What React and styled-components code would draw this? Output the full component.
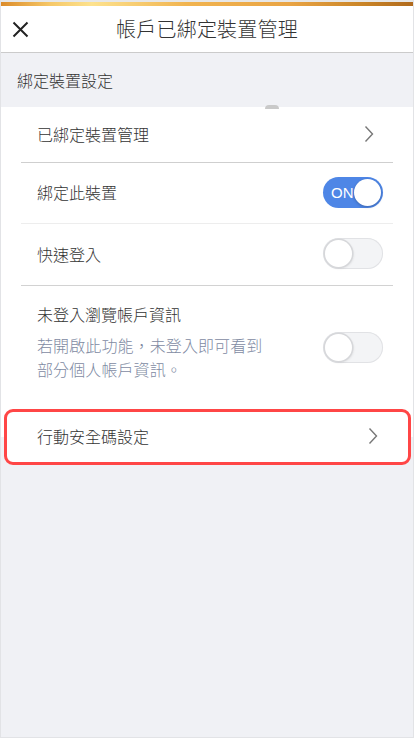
import React from "react";
import styled, { createGlobalStyle } from "styled-components";

const Global = createGlobalStyle`
  html, body { margin: 0; padding: 0; background: #ffffff; }
  body { font-family: "Noto Sans CJK TC", "Noto Sans", sans-serif; color: #333; font-weight: 300; }
  * { box-sizing: border-box; }
`;

const Page = styled.div`
  width: 414px;
  height: 738px;
  background: #f0f1f5;
  border-left: 1px solid #e2e3e6;
  border-right: 1px solid #e2e3e6;
  border-bottom: 1px solid #e2e3e6;
  display: flex;
  flex-direction: column;
  overflow: hidden;
  position: relative;
`;

const TopStrip = styled.div`
  height: 2px;
  background: #e7e7e7;
`;

const GoldBar = styled.div`
  height: 4px;
  background: linear-gradient(90deg, #dc8c2a 0%, #f6c868 12%, #fde28e 22%, #f1b450 45%, #e9a444 70%, #c98427 88%, #b06a1d 100%);
`;

const Header = styled.header`
  height: 47px;
  background: #fff;
  border-bottom: 1px solid #cbcbcb;
  display: grid;
  grid-template-columns: 46px 1fr 46px;
  align-items: center;
`;

const CloseBtn = styled.div`
  display: flex;
  align-items: center;
  justify-content: flex-start;
  padding-left: 11px;
  svg { display: block; }
`;

const Title = styled.h1`
  margin: 0;
  font-size: 20px;
  font-weight: 300;
  line-height: 28px;
  text-align: center;
  color: #333;
  letter-spacing: 0.2px;
`;

const SectionHead = styled.div`
  height: 54px;
  display: flex;
  align-items: center;
  padding-left: 16px;
  font-size: 16px;
  line-height: 22px;
  color: #333;
  position: relative;
`;

const Nub = styled.span`
  position: absolute;
  left: 264px;
  bottom: -2px;
  width: 14px;
  height: 4px;
  border-radius: 7px 7px 0 0;
  background: #c9c9c9;
`;

const Card = styled.section`
  background: #fff;
  padding: 0 20px;
  display: flex;
  flex-direction: column;
`;

const Row = styled.div`
  display: flex;
  align-items: center;
  justify-content: space-between;
  height: ${(p) => p.$h}px;
  padding: 0 10px 2px 16px;
  border-bottom: 1px solid ${(p) => p.$line};
`;

const Label = styled.span`
  font-size: 16px;
  line-height: 22px;
  color: #333;
`;

const Chevron = styled.svg`
  margin-right: ${(p) => p.$mr}px;
  display: block;
`;

const Track = styled.div`
  width: 60px;
  height: 31px;
  border-radius: 16px;
  display: flex;
  align-items: center;
  justify-content: ${(p) => (p.$on ? "space-between" : "flex-start")};
  padding: 2px;
  background: ${(p) => (p.$on ? "#4e86e6" : "#f3f4f6")};
  box-shadow: ${(p) => (p.$on ? "none" : "inset 0 0 0 1px #e1e2e5")};
  align-self: ${(p) => (p.$top ? "start" : "center")};
  margin-top: ${(p) => (p.$top ? "-1px" : "0")};
`;

const OnText = styled.span`
  font-family: "Liberation Sans", Arial, sans-serif;
  color: #fff;
  font-size: 15px;
  line-height: 1;
  padding-left: 6px;
`;

const Knob = styled.div`
  width: 27px;
  height: 27px;
  border-radius: 50%;
  background: #fff;
  box-shadow: ${(p) =>
    p.$on
      ? "0 1px 3px rgba(0,0,0,0.25)"
      : "0 0 0 1.5px #d6d7da, 1px 1px 3px rgba(0,0,0,0.15)"};
`;

const InfoRow = styled.div`
  display: grid;
  grid-template-columns: 1fr auto;
  padding: 17px 10px 14px 16px;
  row-gap: 8px;
`;

const InfoTitle = styled.div`
  grid-column: 1 / 3;
  font-size: 16px;
  line-height: 22px;
  color: #333;
`;

const Desc = styled.div`
  font-size: 16px;
  line-height: 24px;
  color: #7e8aa2;
  letter-spacing: 0.1px;
`;

const Spacer = styled.div`
  height: 14px;
  background: #fff;
`;

const Highlight = styled.div`
  background: #fff;
  margin: 0 3px;
  width: 407px;
  height: 56px;
  border: 3px solid #ff4646;
  border-radius: 9px;
  display: flex;
  align-items: center;
  justify-content: space-between;
  padding: 0 30px 2px 30px;
`;

const WhiteBack = styled.div`
  background: linear-gradient(#fff 0 50%, #f0f1f5 50% 100%);
`;

function Switch({ on, top }) {
  return (
    <Track $on={on} $top={top}>
      {on && <OnText>ON</OnText>}
      <Knob $on={on} />
    </Track>
  );
}

function Arrow({ mr = 10 }) {
  return (
    <Chevron $mr={mr} width="10" height="18" viewBox="0 0 10 18">
      <path d="M1.5 1.5 L8.5 9 L1.5 16.5" fill="none" stroke="#777" strokeWidth="1.4" />
    </Chevron>
  );
}

export default function App() {
  return (
    <>
      <Global />
      <Page>
        <TopStrip />
        <GoldBar />
        <Header>
          <CloseBtn>
            <svg width="17" height="17" viewBox="0 0 17 17">
              <path d="M1.5 1.5 L15.5 15.5 M15.5 1.5 L1.5 15.5" stroke="#222" strokeWidth="2" />
            </svg>
          </CloseBtn>
          <Title>帳戶已綁定裝置管理</Title>
          <div />
        </Header>
        <SectionHead>
          綁定裝置設定
          <Nub />
        </SectionHead>
        <Card>
          <Row $h={56} $line="#cfcfcf">
            <Label>已綁定裝置管理</Label>
            <Arrow mr={9} />
          </Row>
          <Row $h={61} $line="#ededed">
            <Label>綁定此裝置</Label>
            <Switch on />
          </Row>
          <Row $h={62} $line="#d2d2d2">
            <Label>快速登入</Label>
            <Switch on={false} />
          </Row>
          <InfoRow>
            <InfoTitle>未登入瀏覽帳戶資訊</InfoTitle>
            <Desc>
              若開啟此功能，未登入即可看到
              <br />
              部分個人帳戶資訊。
            </Desc>
            <Switch on={false} top />
          </InfoRow>
        </Card>
        <Spacer />
        <WhiteBack>
          <Highlight>
            <Label>行動安全碼設定</Label>
            <Arrow mr={0} />
          </Highlight>
        </WhiteBack>
      </Page>
    </>
  );
}
